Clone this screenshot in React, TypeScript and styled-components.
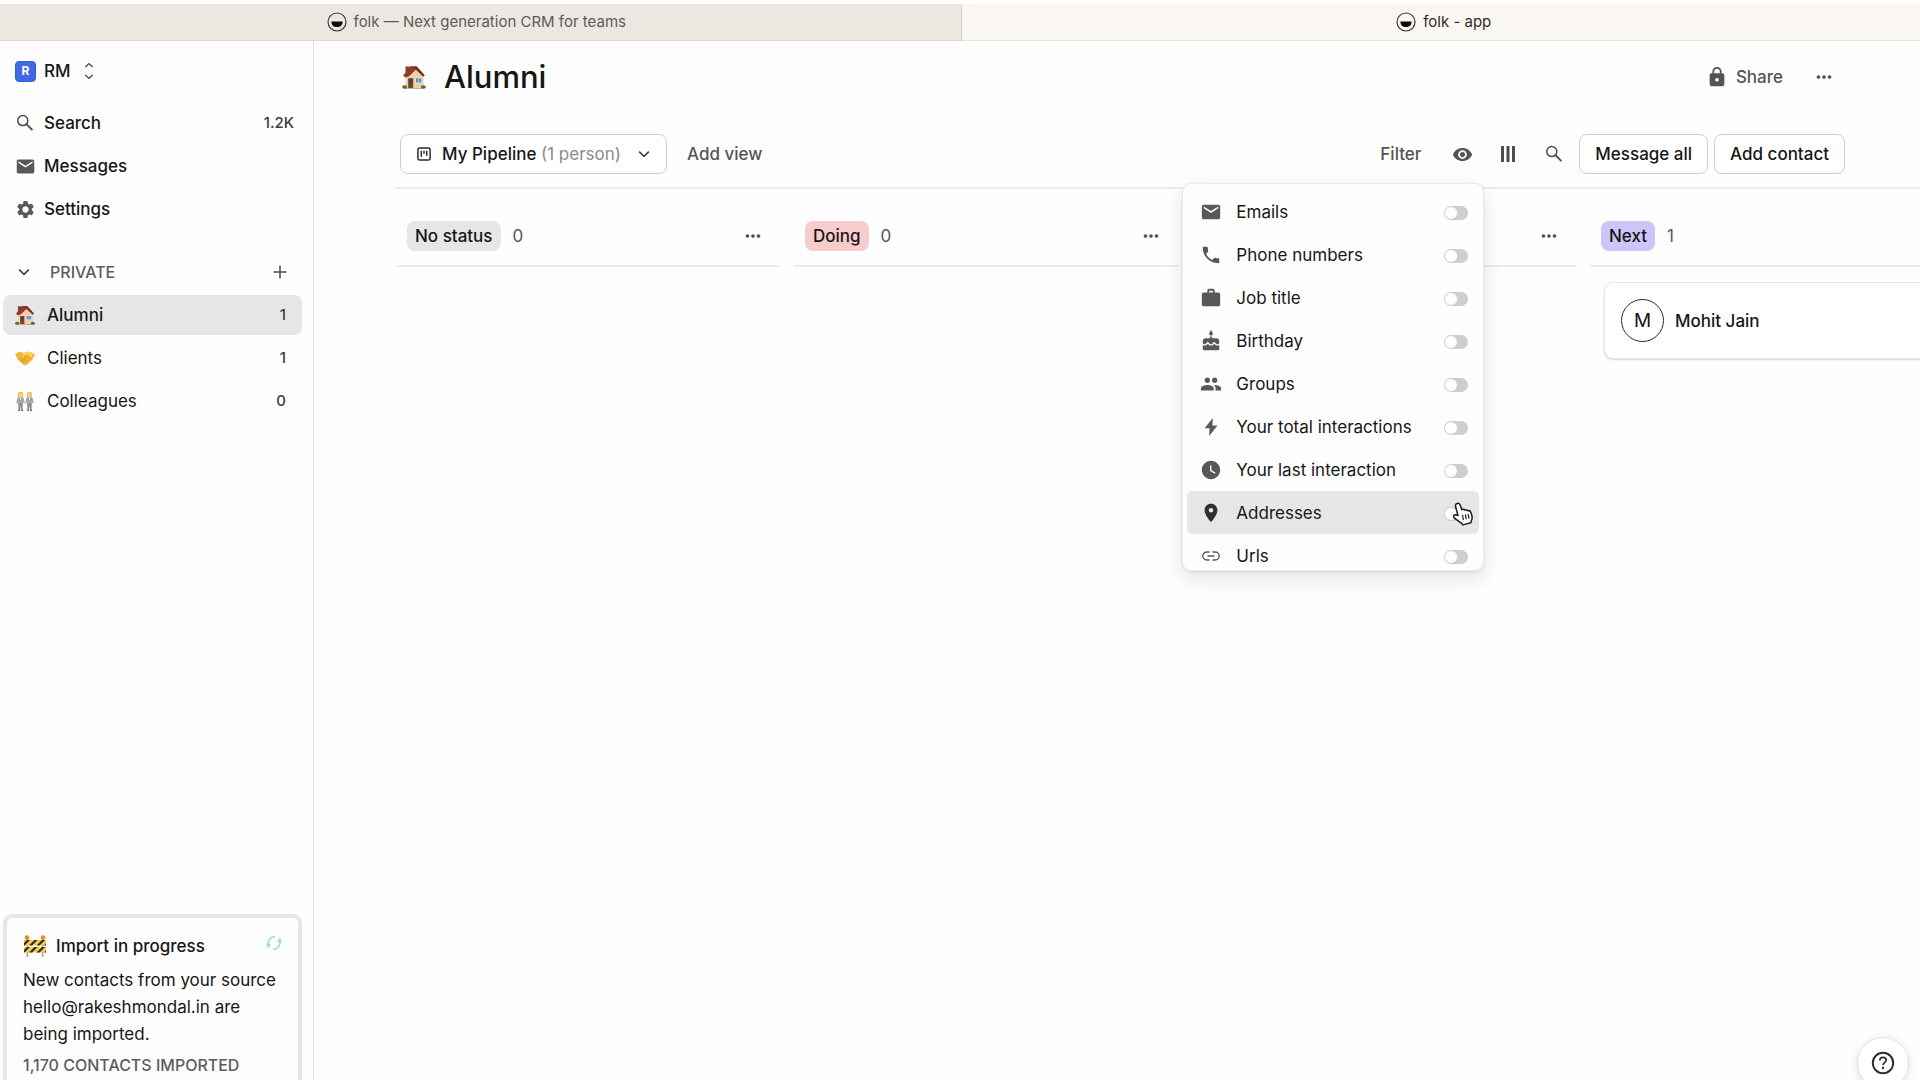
import React from "react";
import styled, { createGlobalStyle, css } from "styled-components";
import {
  MdCake, MdEmail, MdLocationOn, MdLock, MdMoreHoriz, MdPeople, MdPhone,
  MdSettings, MdVisibility, MdWatchLater, MdWork,
} from "react-icons/md";

const GlobalStyle = createGlobalStyle`
  *, *::before, *::after { box-sizing: border-box; }
  body {
    margin: 0;
    overflow: hidden;
    background: #fefefe;
    color: #161616;
    font-family: Inter, "Liberation Sans", sans-serif;
    font-size: 17px;
    line-height: 24px;
  }
  button, input { font: inherit; color: inherit; }
  a { color: inherit; text-decoration: none; }
  h1, h2, p, ul { margin: 0; padding: 0; font-weight: inherit; }
  ul { list-style: none; }
  svg { display: block; flex: none; }
`;

/* ---------- icons ---------- */

const FolkLogo = () => (
  <svg width="20" height="20" viewBox="0 0 20 20" aria-hidden="true">
    <circle cx="10" cy="10" r="9" fill="none" stroke="#3a3937" strokeWidth="1.2" />
    <path d="M4.4 9.4h11.2c0 3.6-2 5.6-5.6 5.6s-5.6-2-5.6-5.6z" fill="#0c0c0c" />
  </svg>
);

const SearchIcon = ({ size = 18 }: { size?: number }) => (
  <svg width={size} height={size} viewBox="0 0 18 18" fill="none" stroke="#4a4a4c" strokeWidth="1.5" aria-hidden="true">
    <circle cx="6.8" cy="6.6" r="5" />
    <path d="M10.4 10.2l6 6" strokeWidth="1.8" />
  </svg>
);

const ChevronDown = () => (
  <svg width="12" height="12" viewBox="0 0 12 12" fill="none" stroke="#3c3c3e" strokeWidth="1.5" aria-hidden="true">
    <path d="M1.2 3.6L6 8.4l4.8-4.8" />
  </svg>
);

const UpDown = () => (
  <svg width="10" height="18" viewBox="0 0 10 18" fill="none" stroke="#4a4a4c" strokeWidth="1.4" aria-hidden="true">
    <path d="M1.4 5L5 1.6 8.6 5M1.4 13L5 16.4 8.6 13" />
  </svg>
);

const PlusIcon = () => (
  <svg width="14" height="14" viewBox="0 0 14 14" stroke="#4a4a4c" strokeWidth="1.5" aria-hidden="true">
    <path d="M7 .6v12.8M.6 7h12.8" />
  </svg>
);

const BoardIcon = () => (
  <svg width="14" height="14" viewBox="0 0 14 14" fill="none" stroke="#2a2a2c" strokeWidth="1.5" aria-hidden="true">
    <rect x=".9" y=".9" width="12.2" height="12.2" rx="1.6" />
    <path d="M4.3 3.8v6M7 3.8v3M9.7 3.8v5" />
  </svg>
);

const ColumnsIcon = () => (
  <svg width="16" height="16" viewBox="0 0 16 16" fill="#4d4d4f" aria-hidden="true">
    <path d="M1 0h3v16H1zM6.5 0h3v16h-3zM12 0h3v16h-3z" />
  </svg>
);

const BoltIcon = () => (
  <svg width="20" height="20" viewBox="0 0 20 20" fill="#58585a" aria-hidden="true">
    <path d="M11.800 1L3.600 11.200h4.900L8.200 19l8.200-10.500h-5z" />
  </svg>
);

const LinkIcon = () => (
  <svg width="18" height="18" viewBox="0 0 18 18" fill="none" stroke="#5a5a5c" strokeWidth="1.4" aria-hidden="true">
    <path d="M7.6 5H4.8a4 4 0 0 0 0 8h2.8M10.4 5h2.8a4 4 0 0 1 0 8h-2.8M5.5 9h7" />
  </svg>
);

const SyncIcon = () => (
  <svg width="16" height="16" viewBox="0 0 16 16" fill="none" stroke="#a3ddcd" strokeWidth="1.7" aria-hidden="true">
    <path d="M2.500 10A6 6 0 0 1 6 2.400M7 14.200a6 6 0 0 0 3.400-.5M13.500 6A6 6 0 0 1 10 13.600M9 1.800a6 6 0 0 0-3.400.5" />
    <path d="M0 8.200l5.200 1.200-3.400 4zM16 7.800l-5.200-1.200 3.400-4z" fill="#a3ddcd" stroke="none" />
  </svg>
);

const HelpIcon = () => (
  <svg width="24" height="24" viewBox="0 0 24 24" fill="none" stroke="#2d2d2f" aria-hidden="true">
    <circle cx="12" cy="12" r="10.2" strokeWidth="1.9" />
    <path d="M8.8 9.4c0-1.8 1.4-3.1 3.2-3.1s3.2 1.2 3.2 2.9c0 2.4-3.2 2.5-3.2 5" strokeWidth="1.7" />
    <circle cx="12" cy="17" r="1.2" fill="#2d2d2f" stroke="none" />
  </svg>
);

const House = ({ size = 20 }: { size?: number }) => (
  <svg width={size} height={size} viewBox="0 0 24 24" aria-hidden="true">
    <path d="M3.5 1.5h4.2v6H3.5z" fill="#8c3b30" />
    <path d="M3.6 11.5L13.5 3l8 8.300V23H3.6z" fill="#f0cfa6" />
    <path d="M1.2 10.6L8 1.4h6.6l8 8.8-1.3 1.3-7.6-6.7-6.6 6.4-3.8 1.2z" fill="#93392f" />
    <path d="M8 1.4h6.6l8 8.8-1.3 1.3L13.6 3.6z" fill="#75281f" />
    <path d="M6.200 13.200h5V23h-5z" fill="#704428" />
    <path d="M7.200 14.500h2.900v3H7.200z" fill="#43404a" />
    <path d="M13.200 12.600h6.800v5.600h-6.800z" fill="#f8ead2" />
    <path d="M13.900 13.300h2.500v4.200h-2.500zM16.900 13.300h2.500v4.200h-2.500z" fill="#5590c9" />
    <path d="M3 23h18v.8H3z" fill="#aaa093" />
    <ellipse cx="2.6" cy="22" rx="2.5" ry="1.8" fill="#4c6c32" />
    <ellipse cx="21.4" cy="22" rx="2.5" ry="1.8" fill="#4c6c32" />
  </svg>
);

const Handshake = () => (
  <svg width="20" height="20" viewBox="0 0 20 20" aria-hidden="true">
    <path d="M0 6l4.5-2.2L9 5l3-1.2 3.5.2L20 6.6l-2.6 5-5.4 5.2c-1 .8-2.4.8-3.4 0L2.600 11z" fill="#f2b633" />
    <path d="M4.5 3.8L9 5l3-1.2 3.5.2 3 1.8-2.8 4.6-3.5-2.8-3.4 1.6C6.8 9.6 6.4 7.4 8.4 6z" fill="#fbd04d" />
    <path d="M8.8 9.2l3.4-1.6 4 3.6M4 11.4l4.6 4.2M6.2 10.4l4.3 4M8.6 10l4 3.6" fill="none" stroke="#cc861d" strokeWidth=".8" />
  </svg>
);

const TwoPeople = () => (
  <svg width="20" height="20" viewBox="0 0 20 20" aria-hidden="true">
    {[0, 9].map((x) => (
      <g key={x} transform={`translate(${x} 0)`}>
        <path d="M3 3.2a2.500 2.500 0 0 1 5 0L7.600 6H3.400z" fill="#edb735" />
        <ellipse cx="5.5" cy="3.800" rx="1.700" ry="2" fill="#ffd766" />
        <path d="M2.600 6.400l2-.6h1.800l2 .6L9.800 12l-1 .8L7.800 10v3H3.200v-3l-1 2.800-1-.8z" fill="#a1a4a6" />
        <path d="M4.600 5.800h1.800L5.500 10z" fill="#f4f4f4" />
        <path d="M3.200 12.600h4.600L7.600 19H6l-.5-5-.5 5H3.400z" fill="#8b8e91" />
        <path d="M3 18.800h2v1H3zM6 18.800h2v1H6z" fill="#444" />
      </g>
    ))}
  </svg>
);

const Barrier = () => (
  <svg width="24" height="24" viewBox="0 0 24 24" aria-hidden="true">
    <path d="M3.6 5h1.6v18H3.6zM18.8 5h1.6v18h-1.6z" fill="#a3a3a3" />
    <circle cx="4" cy="3.6" r="2.3" fill="#ee8a27" />
    <circle cx="20" cy="3.6" r="2.3" fill="#ee8a27" />
    <path d="M1 6h22v5.5H1zM1 13h22v5.5H1z" fill="#f3c94b" />
    <path d="M1 9l3-3h3l-5.5 5.5H1zM6 11.5L11.5 6h3L9 11.5zM13.5 11.5L19 6h3l-5.5 5.5zM21 11.5l2-2v2zM1 16l3-3h3l-5.5 5.5H1zM6 18.5l5.5-5.5h3L9 18.5zM13.5 18.5L19 13h3l-5.5 5.5zM21 18.5l2-2v2z" fill="#2b2926" />
  </svg>
);

const HandPointer = () => (
  <svg width="22" height="24" viewBox="0 0 22 24" aria-hidden="true">
    <path
      d="M5.2 1.5c1.3-.5 2.4.2 2.9 1.5l1.7 4.7c.9-.8 2.4-.6 3 .4 1-.6 2.3-.3 2.900.7 1.300-.4 2.700.2 3.200 1.600l.9 2.800c.6 2 .4 3.700-.4 5.300l-.6 2.200-8 2.200-1.300-1.800c-2-1-4.400-3-7.200-5.200-1.500-1.300-.6-3.400 1.400-3.100l2.300.7-2.500-9.200c-.3-1.300.4-2.400 1.700-2.800z"
      fill="#fff" stroke="#1c1c1c" strokeWidth="1.5" strokeLinejoin="round"
    />
    <path d="M10.5 13l.9 5M13.4 12.4l.9 5M16.2 12l.8 4.6" stroke="#1c1c1c" strokeWidth="1.2" />
  </svg>
);

/* ---------- browser tabs ---------- */

const Page = styled.div`
  display: flex;
  flex-direction: column;
  height: 100vh;
  padding-top: 4px;
`;

const TabBar = styled.nav`
  display: flex;
  flex: none;
  height: 37px;
  font-size: 15px;
`;

const Tab = styled.a<{ $active?: boolean }>`
  display: flex;
  flex: 1;
  align-items: center;
  justify-content: center;
  gap: 7px;
  padding: ${(p) => (p.$active ? "0 0 0 6px" : "0 8px 0 0")};
  border-bottom: 1px solid ${(p) => (p.$active ? "#ece4df" : "#dcd8d1")};
  border-right: ${(p) => (p.$active ? "none" : "1px solid #d8d4cd")};
  background: ${(p) => (p.$active ? "#faf7f2" : "#ebe8e2")};
  color: ${(p) => (p.$active ? "#2f2e2c" : "#5c5a57")};
`;

const Shell = styled.div`
  display: flex;
  flex: 1;
  min-height: 0;
`;

/* ---------- sidebar ---------- */

const Sidebar = styled.aside`
  display: flex;
  flex: none;
  flex-direction: column;
  width: 314px;
  padding: 10px 11px 0 3px;
  border-right: 1px solid #e2e2e2;
`;

const plainButton = css`
  display: flex;
  align-items: center;
  padding: 0;
  border: 0;
  background: none;
  cursor: pointer;
`;

const Workspace = styled.button`
  ${plainButton}
  gap: 8px;
  height: 40px;
  padding-left: 12px;
  font-weight: 500;
`;

const WorkspaceBadge = styled.span`
  display: grid;
  place-items: center;
  width: 21px;
  height: 21px;
  border: 1px solid #2563e0;
  border-radius: 4px;
  background: #4169e1;
  color: #fff;
  font-size: 12px;
  font-weight: 700;
  line-height: 18px;
`;

const WorkspaceName = styled.span`
  margin-right: 5px;
`;

const NavList = styled.ul<{ $top?: number }>`
  display: flex;
  flex-direction: column;
  gap: 3px;
  margin-top: ${(p) => p.$top ?? 0}px;
`;

const NavLink = styled.a<{ $active?: boolean; $group?: boolean }>`
  display: flex;
  align-items: center;
  gap: ${(p) => (p.$group ? 12 : 10)}px;
  height: 40px;
  padding: 0 ${(p) => (p.$group ? 16 : 8)}px 0 ${(p) => (p.$group ? 12 : 13)}px;
  border-radius: 8px;
  background: ${(p) => (p.$active ? "#e6e6e6" : "transparent")};
  font-weight: ${(p) => (p.$group && !p.$active ? 400 : 500)};
  svg { color: #58585a; }
`;

const Count = styled.span`
  margin-left: auto;
  color: #3c3c3e;
  font-size: 15px;
  font-weight: 500;
`;

const GroupHeader = styled.div`
  display: flex;
  align-items: center;
  height: 40px;
  margin-top: 23px;
  padding: 0 15px;
`;

const GroupToggle = styled.button`
  ${plainButton}
  gap: 20px;
  color: #5c5c5e;
  font-size: 16px;
  font-weight: 500;
`;

const AddGroup = styled.button`
  ${plainButton}
  margin-left: auto;
`;

const ImportCard = styled.section`
  display: flex;
  flex-direction: column;
  flex: none;
  height: 166px;
  margin-top: auto;
  padding: 15px 16px 0;
  border: 4px solid #e6e6e6;
  border-bottom: 0;
  border-radius: 9px 9px 0 0;
`;

const ImportTitle = styled.h2`
  display: flex;
  align-items: center;
  gap: 9px;
  height: 26px;
  font-size: 17px;
  font-weight: 500;
  svg:last-child { margin: 0 0 6px auto; }
`;

const ImportText = styled.p`
  margin-top: 8px;
  line-height: 27px;
`;

const ImportStatus = styled.p`
  margin-top: 5px;
  color: #5c5c5e;
  font-size: 16px;
  font-weight: 500;
`;

/* ---------- main ---------- */

const Main = styled.main`
  display: flex;
  flex: 1;
  flex-direction: column;
  min-width: 0;
  padding-left: 81px;
  overflow: hidden;
`;

const Header = styled.header`
  display: flex;
  align-items: center;
  height: 70px;
  padding: 2px 85px 0 7px;
`;

const Title = styled.h1`
  display: flex;
  align-items: center;
  gap: 18px;
  font-size: 31px;
  font-weight: 500;
  line-height: 40px;
`;

const GhostButton = styled.button<{ $start?: boolean; $end?: number }>`
  ${plainButton}
  gap: 8px;
  margin-left: ${(p) => (p.$start ? "auto" : "0")};
  margin-right: ${(p) => p.$end ?? 0}px;
  color: #545456;
  font-weight: 500;
`;

const Toolbar = styled.div`
  display: flex;
  align-items: center;
  height: 78px;
  padding: 10px 75px 0 5px;
  border-bottom: 2px solid #ececec;
`;

const OutlineButton = styled.button<{ $end?: number }>`
  ${plainButton}
  height: 40px;
  margin-right: ${(p) => p.$end ?? 0}px;
  padding: 0 15px;
  border: 1px solid #cfcfcf;
  border-radius: 8px;
  background: #fff;
  font-weight: 500;
  white-space: nowrap;
`;

const ViewButton = styled(OutlineButton)`
  gap: 11px;
  padding: 0 16px;
`;

const ViewMeta = styled.span`
  margin-right: 6px;
  color: #8b8b8d;
  font-weight: 400;
`;

const MenuAnchor = styled.div`
  position: relative;
  margin-right: 27px;
`;

const FieldMenu = styled.ul`
  position: absolute;
  z-index: 2;
  top: 39px;
  right: -11px;
  width: 302px;
  height: 388px;
  padding: 6px 4px;
  overflow: hidden;
  border: 1px solid #e9e9e9;
  border-radius: 9px;
  background: #fefefe;
  box-shadow: 0 8px 20px rgba(0, 0, 0, 0.11), 0 1px 3px rgba(0, 0, 0, 0.08);
`;

const FieldRow = styled.label<{ $hover?: boolean }>`
  position: relative;
  display: flex;
  align-items: center;
  gap: 15px;
  height: 43px;
  padding: 2px 11px 0 14px;
  border-radius: 5px;
  background: ${(p) => (p.$hover ? "#e6e6e6" : "transparent")};
  svg { color: ${(p) => (p.$hover ? "#2f2f31" : "#58585a")}; }
`;

const Switch = styled.input`
  flex: none;
  width: 24px;
  height: 14px;
  margin: 2px 0 0 auto;
  padding: 1px;
  border-radius: 7px;
  background: #cdcfcf;
  appearance: none;
  &::before {
    content: "";
    display: block;
    width: 12px;
    height: 12px;
    border-radius: 50%;
    background: #fff;
  }
`;

const Pointer = styled.span`
  position: absolute;
  top: 11px;
  right: 5px;
`;

const IconSlot = styled.span<{ $w: number }>`
  display: flex;
  flex: none;
  justify-content: center;
  width: ${(p) => p.$w}px;
`;

/* ---------- board ---------- */

const Board = styled.div`
  display: flex;
  gap: 14px;
  padding-left: 1px;
`;

const Column = styled.section`
  flex: none;
  width: 384px;
`;

const ColumnHeader = styled.div`
  display: flex;
  align-items: center;
  gap: 12px;
  height: 78px;
  padding: 18px 16px 0 11px;
  border-bottom: 2px solid #ececec;
`;

const Chip = styled.h2<{ $color: string }>`
  padding: 3px 8px;
  border-radius: 8px;
  background: ${(p) => p.$color};
  font-size: 17px;
  font-weight: 500;
`;

const ColumnCount = styled.span`
  color: #58585a;
`;

const Card = styled.article`
  display: flex;
  align-items: center;
  gap: 11px;
  height: 77px;
  margin: 15px 14px 0;
  padding: 0 16px;
  border: 1px solid #e6e6e6;
  border-radius: 9px;
  background: #fff;
  box-shadow: 0 1px 2px rgba(0, 0, 0, 0.16);
  font-weight: 500;
`;

const Avatar = styled.span`
  display: grid;
  place-items: center;
  width: 43px;
  height: 43px;
  border: 1px solid #2a2a2a;
  border-radius: 50%;
  font-size: 19px;
  font-weight: 400;
`;

const HelpButton = styled.button`
  position: fixed;
  right: 11px;
  bottom: -9px;
  display: grid;
  place-items: center;
  width: 52px;
  height: 52px;
  padding: 0;
  border: 1px solid #e2e2e2;
  border-radius: 50%;
  background: #fff;
  box-shadow: 0 2px 10px rgba(0, 0, 0, 0.12);
`;

const navItems = [
  { label: "Search", icon: <SearchIcon />, count: "1.2K" },
  { label: "Messages", icon: <MdEmail size={21} /> },
  { label: "Settings", icon: <MdSettings size={21} /> },
];

const groups = [
  { label: "Alumni", icon: <House />, count: 1, active: true },
  { label: "Clients", icon: <Handshake />, count: 1 },
  { label: "Colleagues", icon: <TwoPeople />, count: 0 },
];

const fields = [
  { label: "Emails", icon: <MdEmail size={22} /> },
  { label: "Phone numbers", icon: <MdPhone size={22} /> },
  { label: "Job title", icon: <MdWork size={22} /> },
  { label: "Birthday", icon: <MdCake size={22} /> },
  { label: "Groups", icon: <MdPeople size={22} /> },
  { label: "Your total interactions", icon: <BoltIcon /> },
  { label: "Your last interaction", icon: <MdWatchLater size={22} /> },
  { label: "Addresses", icon: <MdLocationOn size={22} />, hover: true },
  { label: "Urls", icon: <LinkIcon /> },
];

const columns = [
  { label: "No status", color: "#e6e6e6", count: 0, people: [] as string[] },
  { label: "Doing", color: "#f8cccc", count: 0, people: [] as string[] },
  { label: "Done", color: "#cdebd8", count: 0, people: [] as string[] },
  { label: "Next", color: "#cfc5fb", count: 1, people: ["Mohit Jain"] },
];

export default function App() {
  return (
    <Page>
      <GlobalStyle />
      <TabBar aria-label="Browser tabs">
        <Tab href="#home"><FolkLogo />folk — Next generation CRM for teams</Tab>
        <Tab href="#app" $active><FolkLogo />folk - app</Tab>
      </TabBar>
      <Shell>
        <Sidebar>
          <Workspace>
            <WorkspaceBadge>R</WorkspaceBadge>
            <WorkspaceName>RM</WorkspaceName>
            <UpDown />
          </Workspace>
          <NavList $top={12}>
            {navItems.map((n) => (
              <li key={n.label}>
                <NavLink href={`#${n.label}`}>
                  <IconSlot $w={18}>{n.icon}</IconSlot>
                  {n.label}
                  {n.count && <Count>{n.count}</Count>}
                </NavLink>
              </li>
            ))}
          </NavList>
          <GroupHeader>
            <GroupToggle aria-expanded="true"><ChevronDown />PRIVATE</GroupToggle>
            <AddGroup aria-label="Add group"><PlusIcon /></AddGroup>
          </GroupHeader>
          <NavList $top={3}>
            {groups.map((g) => (
              <li key={g.label}>
                <NavLink href={`#${g.label}`} $active={g.active} $group>
                  {g.icon}
                  {g.label}
                  <Count>{g.count}</Count>
                </NavLink>
              </li>
            ))}
          </NavList>
          <ImportCard>
            <ImportTitle><Barrier />Import in progress<SyncIcon /></ImportTitle>
            <ImportText>New contacts from your source hello@rakeshmondal.in are being imported.</ImportText>
            <ImportStatus>1,170 CONTACTS IMPORTED</ImportStatus>
          </ImportCard>
        </Sidebar>
        <Main>
          <Header>
            <Title><House size={24} />Alumni</Title>
            <GhostButton $start $end={30}><MdLock size={22} />Share</GhostButton>
            <GhostButton aria-label="More options"><MdMoreHoriz size={22} /></GhostButton>
          </Header>
          <Toolbar>
            <ViewButton $end={20} aria-haspopup="listbox">
              <BoardIcon />
              <span>My Pipeline <ViewMeta>(1 person)</ViewMeta></span>
              <ChevronDown />
            </ViewButton>
            <GhostButton>Add view</GhostButton>
            <GhostButton $start $end={31}>Filter</GhostButton>
            <MenuAnchor>
              <GhostButton aria-label="Visible fields" aria-expanded="true"><MdVisibility size={21} /></GhostButton>
              <FieldMenu>
                {fields.map((f) => (
                  <li key={f.label}>
                    <FieldRow $hover={f.hover}>
                      <IconSlot $w={20}>{f.icon}</IconSlot>
                      {f.label}
                      <Switch type="checkbox" role="switch" />
                      {f.hover && <Pointer><HandPointer /></Pointer>}
                    </FieldRow>
                  </li>
                ))}
              </FieldMenu>
            </MenuAnchor>
            <GhostButton aria-label="Columns" $end={29}><ColumnsIcon /></GhostButton>
            <GhostButton aria-label="Search contacts" $end={16}><SearchIcon /></GhostButton>
            <OutlineButton $end={6}>Message all</OutlineButton>
            <OutlineButton>Add contact</OutlineButton>
          </Toolbar>
          <Board>
            {columns.map((c) => (
              <Column key={c.label}>
                <ColumnHeader>
                  <Chip $color={c.color}>{c.label}</Chip>
                  <ColumnCount>{c.count}</ColumnCount>
                  <GhostButton $start aria-label={`${c.label} options`}><MdMoreHoriz size={22} /></GhostButton>
                </ColumnHeader>
                {c.people.map((name) => (
                  <Card key={name}><Avatar>{name[0]}</Avatar>{name}</Card>
                ))}
              </Column>
            ))}
          </Board>
        </Main>
      </Shell>
      <HelpButton aria-label="Help"><HelpIcon /></HelpButton>
    </Page>
  );
}
